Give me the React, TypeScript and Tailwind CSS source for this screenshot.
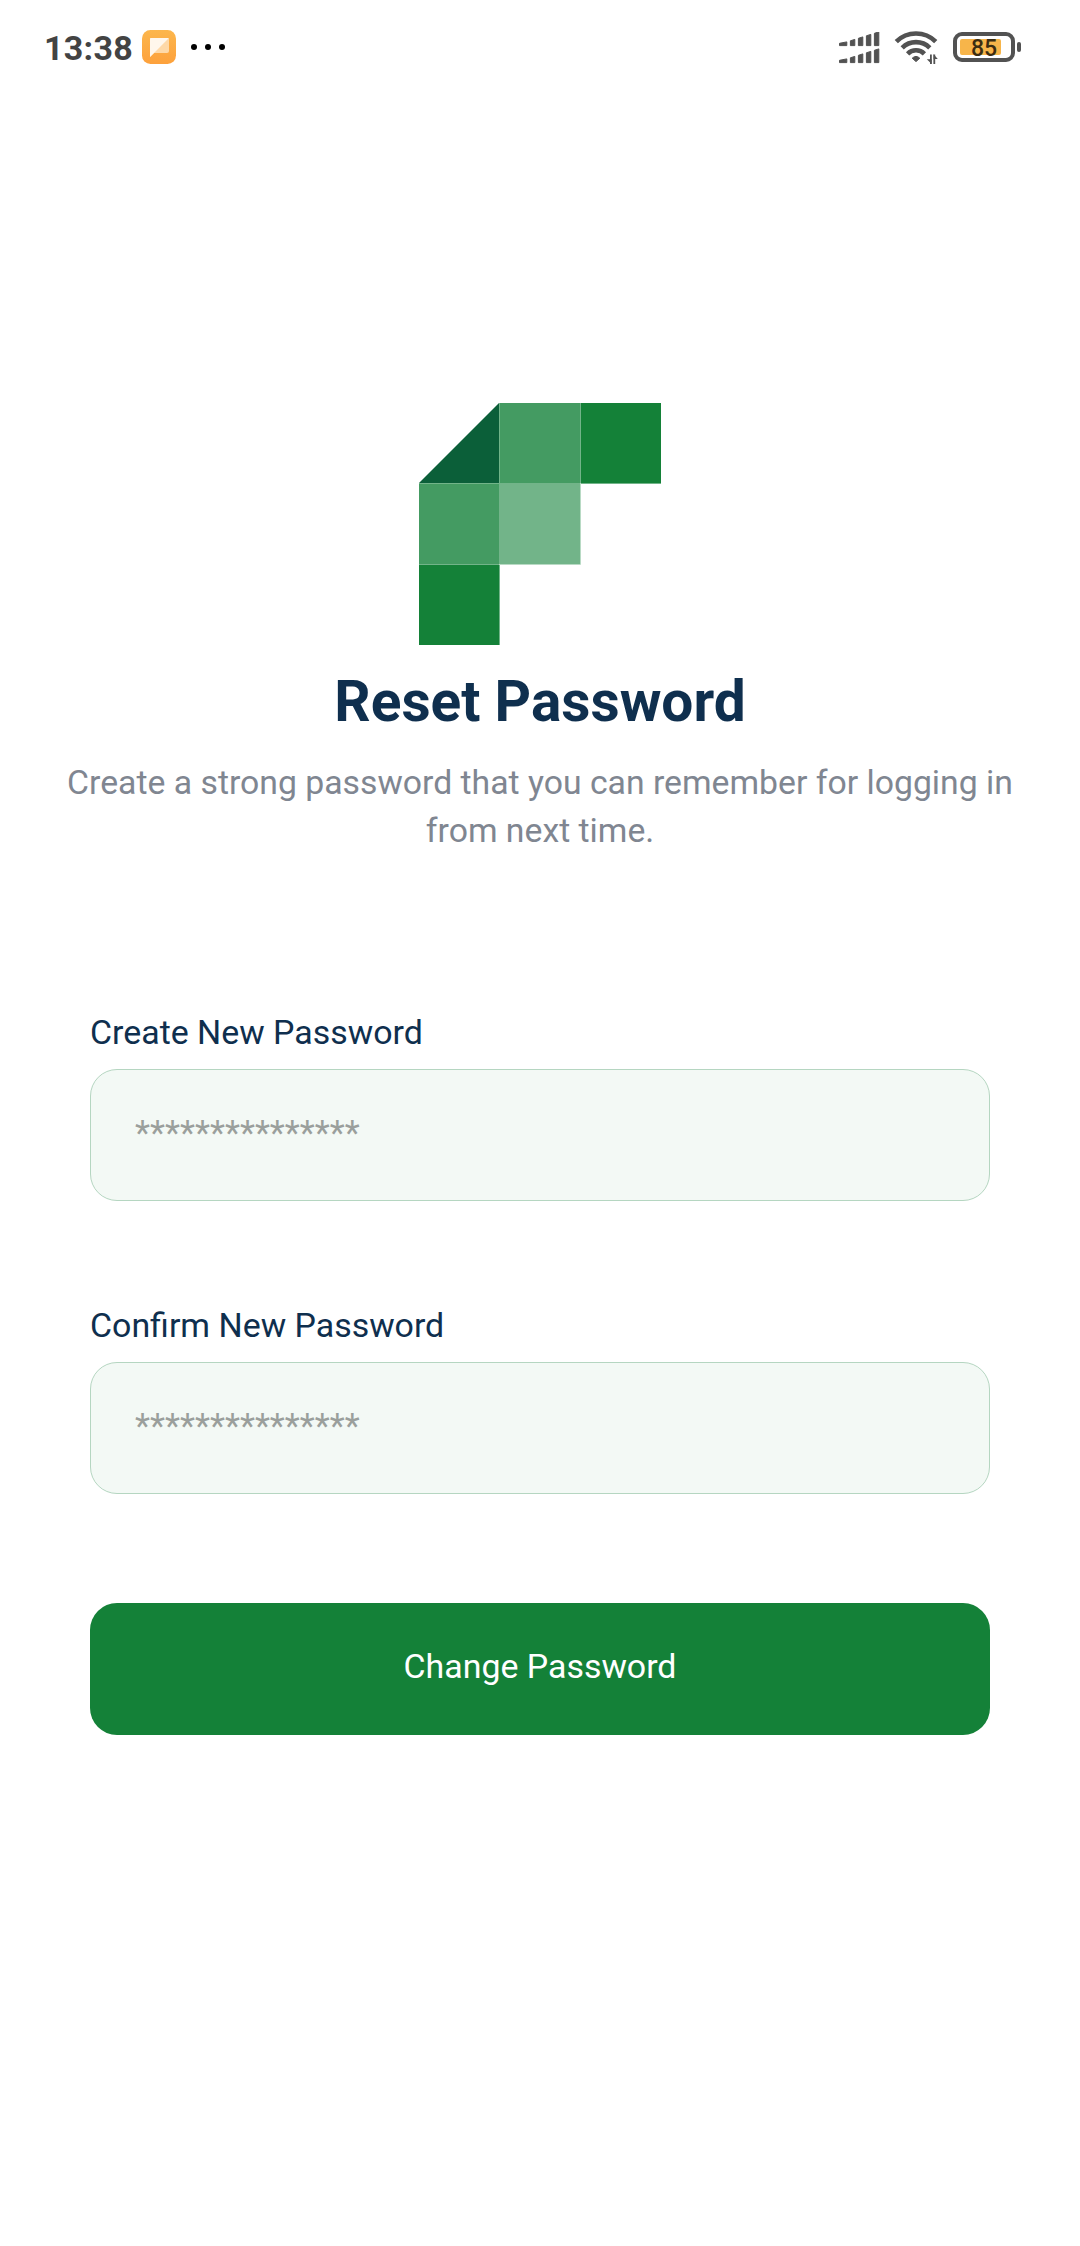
import React from "react";

function SignalIcon() {
  const bars = [0, 8, 16, 24, 32];
  const rows = [
    { base: 31, heights: [3.5, 6, 8.5, 11, 13.5] },
    { base: 48, heights: [3.5, 6, 8.5, 11, 13.5] },
  ];
  return (
    <svg width="42" height="32" viewBox="0 17 42 32" fill="#525252">
      {rows.map((row) =>
        bars.map((x, i) => {
          const left = i === 0 ? 0.5 : x + 3.4;
          const right = x + 7.8;
          const h = row.heights[i];
          return (
            <path
              key={`${row.base}-${x}`}
              stroke="#525252"
              strokeWidth="1"
              strokeLinejoin="round"
              d={`M${left} ${row.base - h + 0.8}L${right} ${row.base - h - 0.6}V${row.base - 0.4}H${left}Z`}
            />
          );
        }),
      )}
    </svg>
  );
}

function WifiIcon() {
  return (
    <svg width="44" height="36" viewBox="894 31 44 36" fill="none" stroke="#525252" strokeWidth="4.6">
      <path d="M896.3 42.6a28 28 0 0 1 39.4 0" />
      <path d="M902.2 48.8a19.7 19.7 0 0 1 27.6 0" />
      <path d="M907.6 54.8a11.8 11.8 0 0 1 16.8 0" />
      <path d="M912.2 59.2Q916 55.6 919.8 59.2L916 62.6Z" fill="#525252" strokeWidth="1" strokeLinejoin="round" />
      <path d="M930.9 55.5v9.5M934.3 55.5v9.5" strokeWidth="1.8" />
      <path d="M931.6 65v-4.8h-4.8ZM933.6 55.3v4.8h4.2Z" fill="#525252" stroke="none" />
    </svg>
  );
}

function BatteryIcon() {
  return (
    <div className="flex items-center gap-[2px]">
      <div className="flex h-[30px] w-[62px] rounded-[9px] border-4 border-[#525252] p-[3px]">
        <div className="flex h-4 w-[41px] items-center justify-center rounded-[2px] bg-[#f7b54a]">
          <span className="mt-[2px] ml-[7px] text-[23px] leading-none font-medium text-[#3b2c12]">85</span>
        </div>
      </div>
      <div className="h-[10px] w-1 rounded-[2px] bg-[#525252]" />
    </div>
  );
}

function NoteIcon() {
  return (
    <svg width="34" height="34" viewBox="0 0 34 34">
      <defs>
        <linearGradient id="noteBg" x1="0" y1="0" x2="0" y2="1">
          <stop offset="0" stopColor="#fcb64c" />
          <stop offset="1" stopColor="#fda13c" />
        </linearGradient>
      </defs>
      <rect width="34" height="34" rx="8.5" fill="url(#noteBg)" />
      <path d="M9 8H26a1 1 0 0 1 1 1V21a2 2 0 0 1-2 2H12L8 27V9a1 1 0 0 1 1-1Z" fill="#fed9a8" />
      <path d="M9 8H26a1 1 0 0 1 .7.3L8 27V9a1 1 0 0 1 1-1Z" fill="#fff7ec" />
    </svg>
  );
}

function StatusBar() {
  return (
    <header className="flex h-[94px] items-center justify-between pr-[59px] pl-[44px]">
      <div className="flex items-center">
        <span className="mt-[2px] w-[98px] text-[34px] leading-[40px] font-bold tracking-[0.3px] text-[#434343]">
          13:38
        </span>
        <NoteIcon />
        <div className="ml-[15px] flex gap-2">
          <i className="size-[6px] rounded-full bg-black" />
          <i className="size-[6px] rounded-full bg-black" />
          <i className="size-[6px] rounded-full bg-black" />
        </div>
      </div>
      <div className="flex items-center">
        <div className="mt-[2px]">
          <SignalIcon />
        </div>
        <div className="mt-[2px] mr-[15px] ml-[13px]">
          <WifiIcon />
        </div>
        <BatteryIcon />
      </div>
    </header>
  );
}

function Logo() {
  return (
    <svg width="242" height="242" viewBox="0 0 242 242" className="mx-auto block">
      <path d="M0 80L80 0V80Z" fill="#0b5f39" />
      <path d="M80 0h81v80H80ZM0 80h80v81H0Z" fill="#449b62" />
      <path d="M161 0h81v80h-81ZM0 161h80v81H0Z" fill="#148138" />
      <path d="M80 80h81v81H80Z" fill="#72b489" />
      <path d="M80.5 0V80M161.5 0V80M0 80.5H242M0 161.5H80M80.5 80V242" stroke="#72b489" />
      <path d="M80 161.5H161.5V80" stroke="#b8dac4" fill="none" />
    </svg>
  );
}

function PasswordField({ label }: { label: string }) {
  return (
    <label className="block">
      <span className="block text-[33.9px] leading-[40px] text-[#0f2f4e]">{label}</span>
      <input
        type="text"
        placeholder="***************"
        className="mt-4 block h-[132px] w-full rounded-[27px] border border-[#b5d6c1] bg-[#f3f9f5] px-[44px] pb-[4px] text-[34.8px] text-[#0f2f4e] outline-none placeholder:text-[#9a9f9c] placeholder:opacity-100"
      />
    </label>
  );
}

export default function App() {
  return (
    <div className="h-[2246px] w-[1080px] overflow-hidden bg-white font-['Roboto',sans-serif]">
      <StatusBar />
      <main className="pt-[309px]">
        <Logo />
        <h1 className="mt-[24px] text-center text-[56.8px] leading-[66px] font-bold text-[#0f2f4e]">Reset Password</h1>
        <p className="mx-auto mt-[24px] w-[960px] text-center text-[33.75px] leading-[48px] text-[#808691]">
          Create a strong password that you can remember for logging in from next time.
        </p>
        <form className="mx-[90px] mt-[158px]" onSubmit={(e) => e.preventDefault()}>
          <PasswordField label="Create New Password" />
          <div className="mt-[105px]">
            <PasswordField label="Confirm New Password" />
          </div>
          <button
            type="submit"
            className="mt-[109px] block h-[132px] w-full rounded-[27px] bg-[#148138] pb-1 text-[33.9px] text-white"
          >
            Change Password
          </button>
        </form>
      </main>
    </div>
  );
}
